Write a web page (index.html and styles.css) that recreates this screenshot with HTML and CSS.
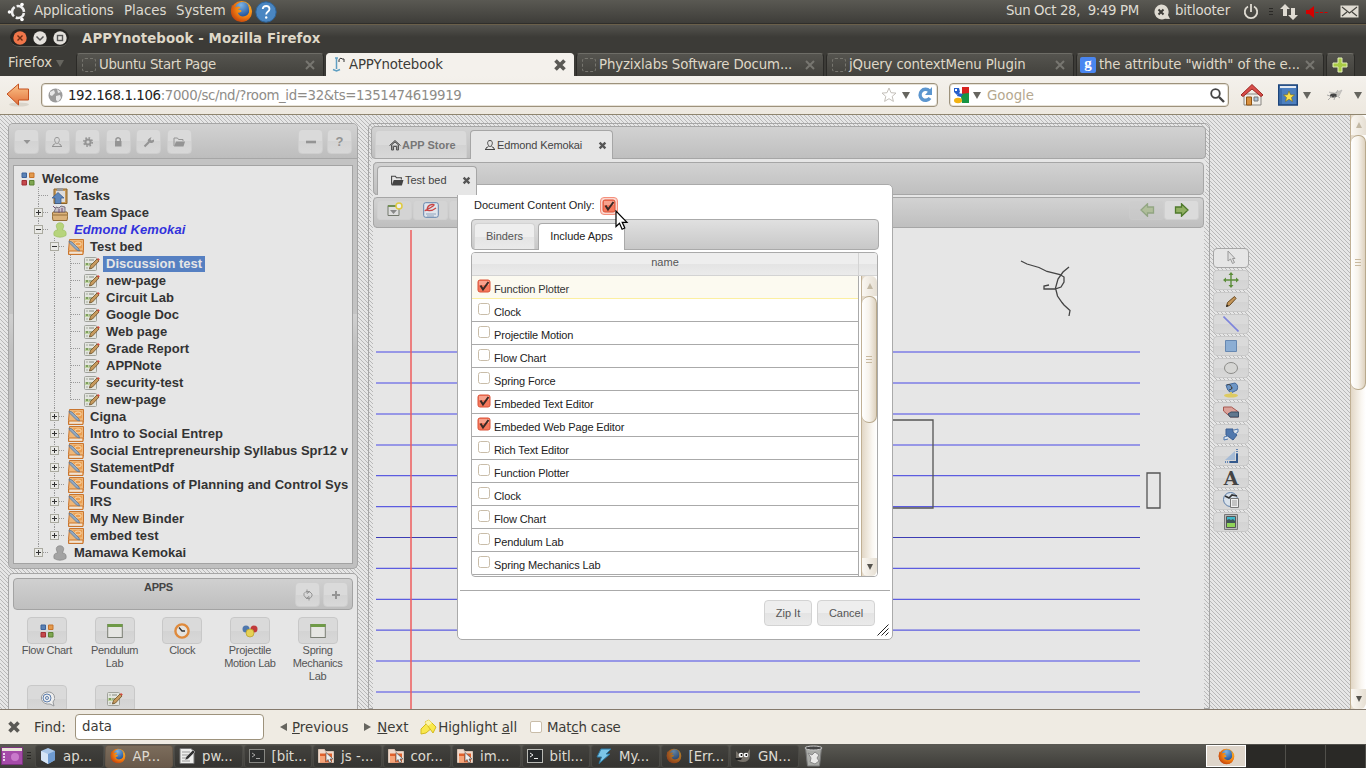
FILE: index.html
```html
<!DOCTYPE html>
<html lang="en">
<head>
<meta charset="utf-8">
<title>APPYnotebook - Mozilla Firefox</title>
<link rel="stylesheet" href="styles.css">
</head>
<body>
<svg class="defs" width="0" height="0">
  <defs>
    <linearGradient id="gOrange" x1="0" y1="0" x2="0" y2="1"><stop offset="0" stop-color="#fbc48a"/><stop offset="1" stop-color="#e2703a"/></linearGradient>
    <radialGradient id="gBlue" cx=".4" cy=".2" r=".8"><stop offset="0" stop-color="#7db4e6"/><stop offset="1" stop-color="#1d4f98"/></radialGradient>
    <radialGradient id="gFox" cx=".7" cy=".3" r=".9"><stop offset="0" stop-color="#ffc62e"/><stop offset=".5" stop-color="#f07d12"/><stop offset="1" stop-color="#b5300a"/></radialGradient>
    <symbol id="fox" viewBox="0 0 24 24"><circle cx="12" cy="12" r="11" fill="url(#gFox)"/><circle cx="13" cy="10" r="8" fill="url(#gBlue)"/><path d="M2 5Q4 8 7 7Q10 6 11 8L8 10Q12 10 12 12Q9 14 8 13Q10 18 15 17Q20 16 20 11Q20 7 18 4Q25 10 21 18Q17 24 10 22Q1 20 1 11Z" fill="url(#gFox)"/></symbol>
    <symbol id="blocks" viewBox="0 0 16 16"><path d="M2 2h4.500v4.500H2z" fill="#5b82b5" stroke="#3d629a"/><path d="M9.500 2H14v4.500H9.500z" fill="#e39a4c" stroke="#c7722a"/><path d="M2 9.500h4.500V14H2z" fill="#c4494c" stroke="#a12f35"/><path d="M9.500 9.500H14V14H9.500z" fill="#7fa651" stroke="#5b8232"/></symbol>
    <symbol id="note" viewBox="0 0 16 16"><rect x=".5" y="1.500" width="12" height="13" rx="1" fill="#e3e5df" stroke="#a1a39c"/><path d="M2 3h2v2H2zM2 11h2v2H2z" fill="#c3c8bd"/><path d="M1 7h9v3H1z" fill="#bfd4a0"/><path d="M2 7h2v2H2z" fill="#7d9e5e"/><path d="M5 4h5M5 8h4M5 12h3" stroke="#868a80"/><path d="M5.500 13l1-3.500L13 3l2 2-6.500 7z" fill="#c79a5e" stroke="#6d5026" stroke-width=".8"/><path d="M13 3l1-1 1.800 1.600-1 1.200z" fill="#d8483d"/></symbol>
    <symbol id="binder" viewBox="0 0 16 16"><path d="M1.500 .5h14v11l-.5 4H.5v-4z" fill="#efb778" stroke="#c8752f"/><path d="M1 12h14.500" stroke="#c8752f"/><path d="M1.500 12.700h12.500v2H1.500z" fill="#efe3d6"/><path d="M5 2h9v7l-4 1z" fill="#eb9e50"/><ellipse cx="10" cy="5" rx="3.200" ry="2" fill="none" stroke="#f9d9ae"/><path d="M1 2l3 1 7 7 .5 2-3-1-7-7z" fill="#92a9c3" stroke="#58728f" stroke-width=".7"/></symbol>
    <symbol id="person" viewBox="0 0 16 16"><path d="M8 .7c3 0 4.300 2.500 3.500 4.500L10.500 8Q15 8 14 13.500Q8 17 2 13.500Q1 8 5.500 8L4.500 5.200C3.700 3 5 .7 8 .7z"/></symbol>
    <symbol id="window" viewBox="0 0 16 16"><rect x=".7" y="1.500" width="14.600" height="13" fill="#e6e6e3" stroke="#7a7e74"/><path d="M.5 1h15v3H.5z" fill="#6f9a47"/></symbol>
    <symbol id="user" viewBox="0 0 12 12"><path d="M6 1.500c2 0 2.500 1.500 2.300 3S7 7.500 6 7.500 4 6 3.700 4.500 4 1.500 6 1.500zM4.500 7.500L2 9v1M7.500 7.500L10 9v1M1 10.500h10" fill="none" stroke="currentColor"/></symbol>
    <symbol id="folder" viewBox="0 0 12 12"><path d="M1 10V2h3.500l1 1.500H10V5" fill="none" stroke="currentColor"/><path d="M3 5.500h9L10.500 10.500H1z" fill="currentColor"/></symbol>
    <symbol id="cross" viewBox="0 0 10 10"><path d="M1.800 1.800l6.400 6.400M8.200 1.800L1.800 8.200" stroke="currentColor" stroke-width="2.600"/></symbol>
    <symbol id="thin" viewBox="0 0 10 10"><path d="M1 1l8 8M9 1L1 9" stroke="currentColor" stroke-width="2"/></symbol>
    <symbol id="term" viewBox="0 0 16 16"><rect x=".5" y="1.500" width="15" height="13" fill="#25282a" stroke="#b9bab5"/><path d="M3 5l3 2-3 2M7 10.500h4" fill="none" stroke="#eee"/></symbol>
    <symbol id="fold" viewBox="0 0 16 16"><path d="M.5 1.500h6l1 2h8v11H.5z" fill="#f0d9cb" stroke="#d9c2b2"/><path d="M2 5.500h12v9H2z" fill="#e0602b"/><path d="M2 8h5v6.500H2z" fill="#f5a478"/><path d="M8 4.500v9l2-2 1.500 3.500 2-1-1.500-3h3z" fill="#eee" stroke="#555" stroke-width=".7"/></symbol>
    <symbol id="pdf" viewBox="0 0 16 16"><path d="M1 .5h11l3 3v12H1z" fill="#eeeeec" stroke="#777"/><path d="M3 4h8M3 7h7M3 10h5M3 13h8" stroke="#999"/><path d="M6 12l1-3 7-7 2 2-7 7z" fill="#333" stroke="#ddd" stroke-width=".5"/></symbol>
    <symbol id="check" viewBox="0 0 14 14"><rect x="1" y="1" width="12" height="12" rx="2" fill="#f5785c" stroke="#da5238"/><path d="M2 2h10v4H2z" fill="#fab3a2" opacity=".7"/><path d="M3.500 6.500L6 10.500 11.500 3" fill="none" stroke="#3a2a26" stroke-width="2"/></symbol>
    <symbol id="box" viewBox="0 0 14 14"><rect x="1.500" y="1.500" width="11" height="11" rx="2" fill="#fff" stroke="#c9bda9"/></symbol>
    <symbol id="house" viewBox="0 0 12 12"><path d="M.5 6.500L6 1.500l5.500 5M2.500 6v5h2V7.500h3V11h2V6L6 3z" fill="currentColor" fill-opacity=".5" stroke="currentColor"/></symbol>
    <symbol id="arrow" viewBox="0 0 16 14"><path d="M1.500 4h6V.8L14 7l-6.500 6.200V10h-6z" fill="#91b063" stroke="#4f7a2c" stroke-width="1.300"/></symbol>
  </defs>
</svg>

<header class="panel">
  <svg class="ubuntu" width="20" height="20" viewBox="0 0 20 20"><circle cx="11" cy="10" r="6" fill="none" stroke="#eee" stroke-width="2.600" stroke-dasharray="10.500 2.060" stroke-dashoffset="-1"/><circle cx="2.500" cy="10" r="1.800" fill="#fff"/><circle cx="15" cy="2.500" r="1.800" fill="#fff"/><circle cx="15" cy="17.500" r="1.800" fill="#fff"/></svg>
  <span class="m-app">Applications</span><span class="m-places">Places</span><span class="m-sys">System</span>
  <svg class="p-fox" width="23" height="23"><use href="#fox"/></svg>
  <svg width="22" height="22" viewBox="0 0 22 22"><circle cx="11" cy="11" r="10.200" fill="#4a86c2" stroke="#2e6398"/><path d="M7.700 8Q8 5 11.200 5T14.500 8Q14.500 9.500 12.500 11 11.200 12 11.200 13.500" fill="none" stroke="#fff" stroke-width="1.800"/><circle cx="11.200" cy="16.500" r="1.200" fill="#fff"/></svg>
  <span class="clock">Sun Oct 28,&nbsp; 9:49 PM</span>
  <svg class="p-chat" width="18" height="16" viewBox="0 0 18 16"><path d="M8 .5a7.500 7.500 0 1 0 4 14.300L17 15 15 11A7.500 7.500 0 0 0 8 .5z" fill="#dfdbd2"/><path d="M5.500 5.500l5 5M10.500 5.500l-5 5" stroke="#3c3b37" stroke-width="2"/></svg>
  <span class="user">bitlooter</span>
  <svg class="p-power" width="16" height="16" viewBox="0 0 16 16"><path d="M5 2.500a6.200 6.200 0 1 0 6 0M8 0v8" fill="none" stroke="#dfdbd2" stroke-width="1.800"/></svg>
  <i class="grip"></i>
  <svg class="p-net" width="18" height="18" viewBox="0 0 18 18"><path d="M5 1l5 5H7v7H3V6H0zM13 17l-5-5h3V5h4v7h3z" fill="#dfdbd2"/></svg>
  <svg class="p-vol" width="22" height="12" viewBox="0 0 22 12"><path d="M0 4h3l5-4v12l-5-4H0z" fill="#d40000"/><path d="M9.500 6.500h12" stroke="#d40000" stroke-dasharray="3 1.500"/></svg>
  <svg class="p-mail" width="19" height="13" viewBox="0 0 19 13"><rect x=".5" y=".5" width="18" height="12" fill="#dfdbd2"/><path d="M2 2l7.500 6L17 2M2 11l5-4M17 11l-5-4" fill="none" stroke="#45443f" stroke-width="1.200"/></svg>
</header>

<div class="titlebar">
  <div class="wbtns">
    <svg width="14" height="14" viewBox="0 0 14 14"><circle cx="7" cy="7" r="6.700" fill="#f0764a"/><path d="M4.500 4.500l5 5M9.500 4.500l-5 5" stroke="#6b2d14" stroke-width="1.400"/></svg>
    <svg width="14" height="14" viewBox="0 0 14 14"><circle cx="7" cy="7" r="6.700" fill="#e4e1dc"/><path d="M3.500 5.500L7 9l3.500-3.500" fill="none" stroke="#555" stroke-width="1.500"/></svg>
    <svg width="14" height="14" viewBox="0 0 14 14"><circle cx="7" cy="7" r="6.700" fill="#e4e1dc"/><rect x="4.500" y="4.500" width="5" height="5" fill="none" stroke="#555" stroke-width="1.400"/></svg>
  </div>
  <span class="wtitle">APPYnotebook - Mozilla Firefox</span>
</div>

<nav class="tabs">
  <span class="ffmenu">Firefox <i class="tri"></i></span>
  <div class="tab wide"><i class="blank"></i><span>Ubuntu Start Page</span><svg width="10" height="10"><use href="#thin"/></svg></div>
  <div class="tab on"><svg class="fav" width="14" height="16" viewBox="0 0 14 16"><path d="M4.500 1v11M1 12.500l3.500 1.500L8 12.500M3 1h3" fill="none" stroke="#5f9fc2" stroke-width="1.500"/><path d="M7 5V2.500L9 1l1 1h2v3" fill="none" stroke="#333"/></svg><span>APPYnotebook</span><svg width="14" height="14"><use href="#cross"/></svg></div>
  <div class="tab"><i class="blank"></i><span>Phyzixlabs Software Docum...</span><svg width="10" height="10"><use href="#thin"/></svg></div>
  <div class="tab"><i class="blank"></i><span>jQuery contextMenu Plugin</span><svg width="10" height="10"><use href="#thin"/></svg></div>
  <div class="tab"><b class="g">g</b><span>the attribute "width" of the e...</span><svg width="10" height="10"><use href="#thin"/></svg></div>
  <div class="tab plus"><svg width="16" height="16" viewBox="0 0 16 16"><path d="M6 1h4v5h5v4h-5v5H6v-5H1V6h5z" fill="#a9cc45" stroke="#e4f0b8"/></svg></div>
</nav>

<div class="nav">
  <svg class="back" width="24" height="24" viewBox="0 0 24 24"><ellipse cx="13" cy="21.500" rx="10" ry="2" fill="#d9d4ca"/><path d="M1 11L12.500 1v5H22.500v11H12.500v5z" fill="url(#gOrange)" stroke="#c4501f"/></svg>
  <div class="url">
    <svg width="15" height="15" viewBox="0 0 15 15"><circle cx="7.500" cy="7.500" r="7" fill="#9b9b9b"/><path d="M2 4l4-2 1 3-3 3-2-1zM8 8l4-1 1 3-3 4-2-2zM9 1l4 3-3 1z" fill="#e8e8e8"/></svg>
    <span><b>192.168.1.106</b>:7000/sc/nd/?room_id=32&amp;ts=1351474619919</span>
    <svg class="star" width="16" height="16" viewBox="0 0 16 16"><path d="M8 1l2 4.700 5 .4-3.800 3.300 1.200 5L8 11.700l-4.400 2.700 1.200-5L1 6.100l5-.4z" fill="#fff" stroke="#c4c0ba"/></svg>
    <i class="tri d"></i>
    <svg class="reload" width="16" height="16" viewBox="0 0 16 16"><path d="M12.500 4A5.500 5.500 0 1 0 13 11" fill="none" stroke="#5c96cf" stroke-width="3.400"/><path d="M8 8h7V0z" fill="#5c96cf"/></svg>
  </div>
  <div class="search">
    <svg width="17" height="17" viewBox="0 0 17 17"><path d="M9 0h7v7H9z" fill="#d8241f"/><path d="M7.500 7l8.500-1v10H9z" fill="#189543"/><path d="M1 1h5l1 4-3 3-3-3z" fill="#255ecb"/><path d="M5 6l5 1-2 3-4-1z" fill="#255ecb"/><path d="M2 2h2v2H2z" fill="#fff"/><ellipse cx="5" cy="13.500" rx="4" ry="2.700" fill="#f2b213"/></svg>
    <i class="tri d"></i><span>Google</span>
    <svg class="lens" width="15" height="15" viewBox="0 0 15 15"><circle cx="5.500" cy="5.500" r="4.300" fill="none" stroke="#444" stroke-width="1.800"/><path d="M9 9l5 5" stroke="#444" stroke-width="2.400"/></svg>
  </div>
  <svg class="home" width="24" height="24" viewBox="0 0 24 24"><path d="M4 11h17v11H4z" fill="#f0eee9" stroke="#8a8782"/><path d="M6.500 14h5v8h-5z" fill="#d9903e" stroke="#8f5413"/><path d="M14 14h4v4h-4z" fill="#a9c4da" stroke="#777"/><path d="M1 12L12 1.500 23 12l-2 1.500L12 6l-9 7.500z" fill="#d94d49" stroke="#9c2723"/></svg>
  <svg class="bm" width="20" height="22" viewBox="0 0 20 22"><path d="M.7 1h18.600v20H.7z" fill="#4c7fbf" stroke="#1d4479" stroke-width="1.400"/><path d="M2 2h16v2H2z" fill="#e4eaf2"/><path d="M3 5v15" stroke="#2d5d9c"/><path d="M11 7l1.500 3.700 4 .3-3 2.500 1 4-3.500-2.200-3.500 2.200 1-4-3-2.500 4-.3z" fill="#f9e04d" stroke="#806b10" stroke-width=".6"/></svg>
  <i class="tri d t1"></i>
  <svg class="fly" width="16" height="15" viewBox="0 0 16 15"><path d="M8 5l7-3-3 6zM2 4l6 1-2 2z" fill="#c9c6c0" stroke="#aaa" stroke-width=".5"/><ellipse cx="6.500" cy="7.500" rx="3.500" ry="2" fill="#444"/><path d="M0 7l3 1M1 12l4-4M7 12l1-4M13 10l-4-3M9 5l2-3" stroke="#999" stroke-width=".8"/></svg>
  <i class="tri d t2"></i>
</div>

<main class="page">
  <div class="left">
    <section class="treepanel">
      <div class="tools">
        <b class="btn"><svg width="12" height="12" viewBox="0 0 12 12"><path d="M2.500 4h7L6 8z" fill="currentColor"/></svg></b>
        <b class="btn"><svg width="12" height="12"><use href="#user"/></svg></b>
        <b class="btn"><svg width="12" height="12" viewBox="0 0 12 12"><circle cx="6" cy="6" r="2.600" fill="none" stroke="currentColor" stroke-width="2"/><circle cx="6" cy="6" r="4.200" fill="none" stroke="currentColor" stroke-width="1.600" stroke-dasharray="1.650 1.650"/></svg></b>
        <b class="btn"><svg width="12" height="12" viewBox="0 0 12 12"><path d="M3 5h6.500v5.500H3z" fill="currentColor"/><path d="M4 5V3q2.200-2.500 4.300 0v2" fill="none" stroke="currentColor" stroke-width="1.400"/></svg></b>
        <b class="btn"><svg width="12" height="12" viewBox="0 0 12 12"><path d="M1.500 10.500L6 6" stroke="currentColor" stroke-width="2.200"/><path d="M8.500 1L7.500 3.500l1 1L11 3.500q.5 3-2 3.500T5 5.500 8.500 1z" fill="currentColor"/></svg></b>
        <b class="btn"><svg width="12" height="12"><use href="#folder"/></svg></b>
        <b class="btn push"><svg width="12" height="12" viewBox="0 0 12 12"><path d="M1 4.700h10v2.600H1z" fill="currentColor"/></svg></b>
        <b class="btn">?</b>
      </div>
      <div class="treebody"><div class="tree">
        <div class="row root"><svg><use href="#blocks"/></svg><span>Welcome</span></div>
        <div class="row"><i class="v h"></i><svg viewBox="0 0 16 16"><path d="M2 1h13v14.500H2z" fill="#c99a58" stroke="#8b6429"/><path d="M4 3h9v11H4z" fill="#ddd"/><path d="M5 0h6v3H5z" fill="#999"/><path d="M0 10l6-5.500L12 10H9v5.500H3V10z" fill="#5f87bb" stroke="#34588a" stroke-width=".7"/></svg><span>Tasks</span></div>
        <div class="row"><i class="v h"></i><svg viewBox="0 0 16 16"><path d="M1 7h14l1 3-1 5.500H1L0 10z" fill="#dbb27a" stroke="#936c37"/><path d="M2 7l2-5 3 1 2-2 4 1v5z" fill="#c9c3cc" stroke="#635a6c" stroke-width=".8"/><path d="M1 1l2 2M7 4v4M10 3v4" stroke="#724d72"/><path d="M0 10h16" stroke="#936c37"/></svg><span>Team Space</span><u class="x p"></u></div>
        <div class="row"><i class="v h"></i><svg fill="#b6d47c" stroke="#97bb57" stroke-width=".6"><use href="#person"/></svg><span class="me">Edmond Kemokai</span><u class="x"></u></div>
        <div class="row"><i class="v"></i><i class="v h"></i><svg><use href="#binder"/></svg><span>Test bed</span><u class="x l2"></u></div>
        <div class="row"><i class="v"></i><i class="v"></i><i class="v h"></i><svg><use href="#note"/></svg><span class="sel">Discussion test</span></div>
        <div class="row"><i class="v"></i><i class="v"></i><i class="v h"></i><svg><use href="#note"/></svg><span>new-page</span></div>
        <div class="row"><i class="v"></i><i class="v"></i><i class="v h"></i><svg><use href="#note"/></svg><span>Circuit Lab</span></div>
        <div class="row"><i class="v"></i><i class="v"></i><i class="v h"></i><svg><use href="#note"/></svg><span>Google Doc</span></div>
        <div class="row"><i class="v"></i><i class="v"></i><i class="v h"></i><svg><use href="#note"/></svg><span>Web page</span></div>
        <div class="row"><i class="v"></i><i class="v"></i><i class="v h"></i><svg><use href="#note"/></svg><span>Grade Report</span></div>
        <div class="row"><i class="v"></i><i class="v"></i><i class="v h"></i><svg><use href="#note"/></svg><span>APPNote</span></div>
        <div class="row"><i class="v"></i><i class="v"></i><i class="v h"></i><svg><use href="#note"/></svg><span>security-test</span></div>
        <div class="row"><i class="v"></i><i class="v"></i><i class="v h end"></i><svg><use href="#note"/></svg><span>new-page</span></div>
        <div class="row"><i class="v"></i><i class="v h"></i><svg><use href="#binder"/></svg><span>Cigna</span><u class="x p l2"></u></div>
        <div class="row"><i class="v"></i><i class="v h"></i><svg><use href="#binder"/></svg><span class="ls">Intro to Social Entrep</span><u class="x p l2"></u></div>
        <div class="row"><i class="v"></i><i class="v h"></i><svg><use href="#binder"/></svg><span>Social Entrepreneurship Syllabus Spr12 v</span><u class="x p l2"></u></div>
        <div class="row"><i class="v"></i><i class="v h"></i><svg><use href="#binder"/></svg><span>StatementPdf</span><u class="x p l2"></u></div>
        <div class="row"><i class="v"></i><i class="v h"></i><svg><use href="#binder"/></svg><span class="ls">Foundations of Planning and Control Sys</span><u class="x p l2"></u></div>
        <div class="row"><i class="v"></i><i class="v h"></i><svg><use href="#binder"/></svg><span>IRS</span><u class="x p l2"></u></div>
        <div class="row"><i class="v"></i><i class="v h"></i><svg><use href="#binder"/></svg><span class="ls">My New Binder</span><u class="x p l2"></u></div>
        <div class="row"><i class="v"></i><i class="v h end"></i><svg><use href="#binder"/></svg><span>embed test</span><u class="x p l2"></u></div>
        <div class="row"><i class="v h end"></i><svg fill="#a3a3a3" stroke="#808080" stroke-width=".6"><use href="#person"/></svg><span>Mamawa Kemokai</span><u class="x p"></u></div>
      </div></div>
    </section>
    <section class="apps">
      <div class="appshead"><span>APPS</span>
        <b class="btn"><svg width="12" height="12" viewBox="0 0 12 12"><path d="M4 2.500L2 4.500v2L4 9M8 3l2 2v2L8 9.500M5 .5v4L8 2.500H4M7 11.500v-4L4 9.500h4" fill="none" stroke="currentColor"/></svg></b>
        <b class="btn"><svg width="12" height="12" viewBox="0 0 12 12"><path d="M6 2v8M2 6h8" stroke="currentColor" stroke-width="2"/></svg></b>
      </div>
      <div class="appgrid">
        <div><b class="abtn"><svg width="16" height="16"><use href="#blocks"/></svg></b>Flow Chart</div>
        <div><b class="abtn"><svg width="16" height="16"><use href="#window"/></svg></b>Pendulum<br>Lab</div>
        <div><b class="abtn"><svg width="16" height="16" viewBox="0 0 16 16"><circle cx="8" cy="8" r="6.600" fill="#e5e3df" stroke="#df8a3c" stroke-width="2.400"/><path d="M5 4.500L8 8h3" fill="none" stroke="#333" stroke-width="1.300"/></svg></b>Clock</div>
        <div><b class="abtn"><svg width="16" height="16" viewBox="0 0 16 16"><circle cx="4" cy="6" r="3.500" fill="#5078ad"/><circle cx="12" cy="6" r="3.500" fill="#c13b3b"/><circle cx="8" cy="10" r="4" fill="#e6d154" stroke="#b39c28" stroke-width=".7"/></svg></b>Projectile<br>Motion Lab</div>
        <div><b class="abtn"><svg width="16" height="16"><use href="#window"/></svg></b>Spring<br>Mechanics<br>Lab</div>
        <div><b class="abtn"><svg width="16" height="16" viewBox="0 0 16 16"><path d="M8 1a7 6 0 1 0 3 12l4 2-1-4A7 6 0 0 0 8 1z" fill="#eee" stroke="#96999c"/><circle cx="8" cy="7" r="4" fill="none" stroke="#5d7fae"/><circle cx="8" cy="7" r="1.500" fill="none" stroke="#5d7fae"/></svg></b></div>
        <div><b class="abtn"><svg width="16" height="16"><use href="#note"/></svg></b></div>
      </div>
    </section>
  </div>

  <section class="center">
    <div class="bar b1">
      <div class="ptab"><svg width="12" height="12"><use href="#house"/></svg><b>APP Store</b></div>
      <div class="ptab on e"><svg width="12" height="12"><use href="#user"/></svg><span>Edmond Kemokai</span><svg class="x" width="9" height="9"><use href="#cross"/></svg></div>
    </div>
    <div class="bar b2">
      <div class="ptab on tb"><svg width="14" height="13"><use href="#folder"/></svg><span>Test bed</span><svg class="x" width="9" height="9"><use href="#cross"/></svg></div>
    </div>
    <div class="bar b3">
      <b class="tbtn"><svg width="16" height="16" viewBox="0 0 16 16"><path d="M1 3.500h11v10H1z" fill="#ddd" stroke="#73786d"/><path d="M1 3h11v2H1z" fill="#718f54"/><path d="M3 8h7l-3.500 4z" fill="#888"/><circle cx="12" cy="4" r="3" fill="#eee" stroke="#dfcb40" stroke-width="1.500"/></svg></b>
      <b class="tbtn"><svg width="16" height="16" viewBox="0 0 16 16"><rect x=".7" y=".7" width="14.600" height="14.600" rx="2" fill="#dfe5ec" stroke="#6585ae"/><path d="M3 12h10M4 14h7" stroke="#8fa3bd"/><path d="M4 9Q4 3 9 2.500T7 6 3 8q5 2 10-2" fill="none" stroke="#c94444" stroke-width="1.300"/></svg></b>
      <b class="tbtn"></b>
      <b class="tbtn dim"><svg class="flip" width="16" height="14"><use href="#arrow"/></svg></b>
      <b class="tbtn go"><svg width="16" height="14"><use href="#arrow"/></svg></b>
    </div>
    <svg class="canvas" width="831" height="482" viewBox="373 228 831 482">
      <path d="M376 352h764M376 383h764M376 414h764M376 445h764" stroke="#7d7de6" stroke-width="1.600"/>
      <path d="M376 475.700h764M376 506.600h764M376 568.400h764M376 599.300h764M376 630.200h764" stroke="#5c5ce0" stroke-width="1.300"/>
      <path d="M376 661h764M376 692h764" stroke="#7d7de6" stroke-width="1.600"/>
      <path d="M376 537.500h764" stroke="#3c3cb4"/>
      <path d="M411 230v480" stroke="#ee5c5c" stroke-width="1.500"/>
      <path d="M880 420h53v88h-53M1147 473h13v35h-13z" fill="none" stroke="#555" stroke-width="1.300"/>
      <path d="M1021 261L1027 264 1039 267.500 1047 271.500 1060 274.500 1064 277V282L1061 287 1055 289H1044V286L1049 285M1069 267L1063 272 1058 279 1055.500 288 1057.500 296 1062 302.500 1064 305 1070 310.500 1069 316" fill="none" stroke="#444" stroke-width="1.300"/>
    </svg>
  </section>

  <aside class="side">
    <b class="sbtn on"><svg viewBox="0 0 16 16"><path d="M5 1v10l2.500-2 2 4.500 2-1-2-4H12z" fill="#e0e0e0" stroke="#999"/></svg></b>
    <b class="sbtn"><svg viewBox="0 0 16 16"><path d="M8 2v12M2 8h12" stroke="#5c8d3a" stroke-width="1.400"/><path d="M8 0l2.500 3h-5zM8 16l2.500-3h-5zM0 8l3-2.500v5zM16 8l-3-2.500v5z" fill="#5c8d3a"/></svg></b>
    <b class="sbtn"><svg viewBox="0 0 16 16"><path d="M3.500 12.500l1-4 7-6 1.500 2-6.500 7z" fill="#c4965a" stroke="#694a20"/><path d="M3 13l1-2.500 1.500 1.500z" fill="#222"/></svg></b>
    <b class="sbtn"><svg viewBox="0 0 16 16"><path d="M.5 .5l15 15" stroke="#7d84dc" stroke-width="1.600"/></svg></b>
    <b class="sbtn"><svg viewBox="0 0 16 16"><path d="M2.500 2.500h11v11h-11z" fill="#8caed4" stroke="#6788b1"/></svg></b>
    <b class="sbtn"><svg viewBox="0 0 16 16"><ellipse cx="8" cy="8" rx="6.500" ry="5.500" fill="#d6d6d4" stroke="#8d8d8a"/></svg></b>
    <b class="sbtn"><svg viewBox="0 0 16 16"><ellipse cx="8" cy="13.500" rx="7" ry="2" fill="#ddca62"/><path d="M3 3l9-2q4 2 2 7l-6 3q-4-2-5-8z" fill="#6f97c6" stroke="#44699a"/><path d="M4 3q4-2 5 4M6 8q3 0 3-3" fill="none" stroke="#444"/><path d="M7 10h2v4H7z" fill="#ddca62"/></svg></b>
    <b class="sbtn"><svg viewBox="0 0 16 16"><path d="M.5 3h8l7 5v5h-8l-7-6z" fill="#dba29a" stroke="#a65850"/><path d="M8 8h7.500v5H7l-2-3z" fill="#60788f" stroke="#394f65"/></svg></b>
    <b class="sbtn"><svg viewBox="0 0 16 16"><path d="M3 3h7v3l4 3-4 5-4-3-3-2z" fill="#5078ad" stroke="#3c5f92"/><path d="M11 4l4-1v3l-3 2M5 10l-4 1v3l4-1" fill="#dde6f0" stroke="#5078ad"/></svg></b>
    <b class="sbtn"><svg viewBox="0 0 16 16"><path d="M2 12L12 3v9z" fill="#a5bbd6"/><path d="M14 6v8H7" fill="none" stroke="#34598c" stroke-width="2"/><path d="M2 14h5M14 1v5" stroke="#6385b3" stroke-width="2" stroke-dasharray="1 1"/></svg></b>
    <b class="sbtn letter">A</b>
    <b class="sbtn"><svg viewBox="0 0 16 16"><circle cx="7.500" cy="7.500" r="7" fill="#d8e1ea" stroke="#5d7ea8"/><path d="M2 4l4 2 3-3 5 1" fill="none" stroke="#333" stroke-width="1.700"/><path d="M7.500 6.500h8v9h-8z" fill="#eee" stroke="#777"/><path d="M9 9h5M9 11h5M9 13h5" stroke="#999"/></svg></b>
    <b class="sbtn"><svg viewBox="0 0 16 16"><path d="M1.500 .5h13v15h-13z" fill="#bbb" stroke="#777"/><path d="M3.500 2.500h9v11h-9z" fill="#40b7ca" stroke="#555"/><path d="M4 13V9h8v4z" fill="#90d458"/><path d="M4 9V6l2-1 2 1 2-1 2 2v2z" fill="#405557"/></svg></b>
  </aside>
  <div class="scroll main"><i class="up"></i><i class="thumb"></i><i class="down"></i></div>

  <div class="dialog">
    <div class="dtop">Document Content Only: <span class="focus"><svg width="14" height="14"><use href="#check"/></svg></span></div>
    <div class="dtabs"><span class="dt">Binders</span><span class="dt on">Include Apps</span></div>
    <div class="table">
      <div class="thead"><span>name</span><i></i></div>
      <div class="tbody">
        <div class="rows">
          <div class="hot"><svg><use href="#check"/></svg>Function Plotter</div>
          <div><svg><use href="#box"/></svg>Clock</div>
          <div><svg><use href="#box"/></svg>Projectile Motion</div>
          <div><svg><use href="#box"/></svg>Flow Chart</div>
          <div><svg><use href="#box"/></svg>Spring Force</div>
          <div><svg><use href="#check"/></svg>Embeded Text Editor</div>
          <div><svg><use href="#check"/></svg>Embeded Web Page Editor</div>
          <div><svg><use href="#box"/></svg>Rich Text Editor</div>
          <div><svg><use href="#box"/></svg>Function Plotter</div>
          <div><svg><use href="#box"/></svg>Clock</div>
          <div><svg><use href="#box"/></svg>Flow Chart</div>
          <div><svg><use href="#box"/></svg>Pendulum Lab</div>
          <div><svg><use href="#box"/></svg>Spring Mechanics Lab</div>
        </div>
        <div class="scroll inner"><i class="up"></i><i class="thumb"></i><i class="down"></i></div>
      </div>
    </div>
    <div class="dfoot"><b>Zip It</b><b>Cancel</b></div>
    <svg class="resize" width="12" height="12" viewBox="0 0 12 12"><path d="M.5 11.500l11-11M4.500 11.500l7-7M8.500 11.500l3-3" stroke="#222"/></svg>
  </div>
  <svg class="cursor" width="14" height="21" viewBox="0 0 14 21"><path d="M1 1v15.500l3.500-3.300 2.600 6 2.700-1.200-2.600-5.700H12z" fill="#fff" stroke="#000" stroke-width="1.200"/></svg>
</main>

<div class="find">
  <svg class="fx" width="14" height="14"><use href="#cross"/></svg>
  <span class="fl">Find:</span><span class="finput">data</span>
  <i class="ar l"></i><span class="f1"><u>P</u>revious</span><i class="ar r"></i><span class="f2"><u>N</u>ext</span>
  <svg class="hl" width="17" height="17" viewBox="0 0 17 17"><path d="M1 10l7-7 5 5-7 6-5 1z" fill="#f9e84e" stroke="#d3b91e"/><path d="M5 3l4-2 7 7-3 6z" fill="#fae94a" stroke="#d3b91e"/><path d="M5 3l4-2 3 3-4 3z" fill="#fdf5a8"/></svg>
  <span class="f3">Highlight <u>a</u>ll</span><i class="fcb"></i><span class="f4">Mat<u>c</u>h case</span>
</div>

<footer class="task">
  <svg class="desk" width="22" height="18" viewBox="0 0 22 18"><path d="M.5 .5h21v17H.5z" fill="#a54ba9" stroke="#7c347f"/><path d="M1 1h20v3H1z" fill="#e9e4d9"/><path d="M2 6h2v2H2zM2 9h2v2H2zM2 12h2v2H2z" fill="#e9d0ea"/><circle cx="14" cy="10" r="4" fill="#c97acb"/></svg>
  <i class="grip"></i>
  <div class="tk"><svg viewBox="0 0 16 16"><path d="M8 0l7 3v9l-7 4-7-4V3z" fill="#a9c6e8"/><path d="M1 3l7 3v10l-7-4z" fill="#d5e4f5"/><path d="M15 3L8 6v10l7-4z" fill="#6f9bd0"/></svg>ap...</div>
  <div class="tk on"><svg><use href="#fox"/></svg>AP...</div>
  <div class="tk"><svg><use href="#pdf"/></svg>pw...</div>
  <div class="tk"><svg opacity=".6"><use href="#term"/></svg>[bit...</div>
  <div class="tk"><svg><use href="#fold"/></svg>js -...</div>
  <div class="tk"><svg><use href="#fold"/></svg>cor...</div>
  <div class="tk"><svg><use href="#fold"/></svg>im...</div>
  <div class="tk"><svg><use href="#term"/></svg>bitl...</div>
  <div class="tk"><svg viewBox="0 0 16 16"><path d="M5 1h10l-5 5h4L3 15.500l2.500-6.500H1z" fill="#7cc6e8" stroke="#2d7ba5"/></svg>My...</div>
  <div class="tk"><svg opacity=".6"><use href="#fox"/></svg>[Err...</div>
  <div class="tk"><svg viewBox="0 0 16 16"><path d="M1 3l3 3 8-1 3-4v7q-1 6-7 6T1 10z" fill="#77726a"/><circle cx="6" cy="7" r="2.300" fill="#fff"/><circle cx="11" cy="7" r="2.300" fill="#fff"/><circle cx="6.500" cy="7" r="1"/><circle cx="11.300" cy="7" r="1"/><path d="M0 10h7l-1 2H1z" fill="#222"/></svg>GN...</div>
  <svg class="trash" width="20" height="22" viewBox="0 0 20 22"><path d="M1.500 3l2 18h12l2-18z" fill="#a9aba7" stroke="#777"/><ellipse cx="9.500" cy="3" rx="8.500" ry="2" fill="#444" stroke="#ccc"/><path d="M4 8l4 2 3-3 4 3-2 3 2 3-4 3-5-2 1-4z" fill="#e9e9e7" stroke="#888"/></svg>
  <div class="ws"><i class="on"><svg width="17" height="17"><use href="#fox"/></svg></i><i></i><i></i><i></i></div>
</footer>
</body>
</html>
```
FILE: styles.css
```css
* { box-sizing: border-box; }
body {
  margin: 0; width: 1366px; height: 768px; overflow: hidden;
  display: flex; flex-direction: column;
  font: 13.33px "DejaVu Sans", sans-serif; color: #3c3b37; white-space: nowrap;
}
svg { flex: none; display: block; }
i { font-style: normal; }
.defs { position: absolute; }

/* desktop panel */
.panel {
  flex: none; height: 24px; display: flex; align-items: center; padding-left: 7px;
  background: linear-gradient(#5a5953, #3e3d39); color: #dfdbd2; border-bottom: 1px solid #2f2e2b;
}
.panel span { margin-top: -2px; }
.m-app { margin-left: 7px; width: 90px; letter-spacing: -.15px; }
.m-places { width: 52px; }
.m-sys { width: 54px; }
.p-fox { margin-right: 2px; }
.clock { margin-left: 729px; width: 147px; letter-spacing: -.37px; }
.p-chat { margin-right: 4px; }
.user { width: 68px; letter-spacing: -.15px; }
.grip { width: 4px; height: 8px; margin-left: 10px; background: repeating-linear-gradient(#2a2926 0 1px, transparent 1px 3px); }
.p-net { margin-left: 7px; }
.p-vol { margin-left: 8px; }
.p-mail { margin-left: 12px; }

.titlebar {
  flex: none; height: 29px; display: flex; align-items: center; padding: 0 0 2px 10px;
  background: linear-gradient(#55544f, #3c3b37 12px); border-top: 1px solid #6a5f4a;
}
.wbtns { width: 59px; height: 18px; border-radius: 9px; background: #272623; display: flex; gap: 6px; align-items: center; padding-left: 3px; border-bottom: 1px solid #5f5e58; }
.wtitle { margin-left: 13px; font-weight: bold; color: #dfd8c8; letter-spacing: .1px; }

.tabs { flex: none; height: 23px; display: flex; background: #3c3b37; color: #dfd8c8; }
.ffmenu { width: 76px; padding: 2px 0 0 8px; }
.tri { display: inline-block; border: 4px solid transparent; border-top: 7px solid #66655f; border-bottom: 0; }
.tri.d { border-top-color: #66655f; }
.tab {
  width: 248px; margin-right: 2px; height: 23px; display: flex; align-items: center; padding: 0 8px 1px 5px;
  background: linear-gradient(#55544f, #42413c); border: 1px solid #2b2a27; border-top-color: #6e6d67; border-bottom: 0; border-radius: 4px 4px 0 0;
  color: #dfd8c8; letter-spacing: -.15px;
}
.tab.wide { letter-spacing: -.3px; }
.tab span { flex: 1; margin-left: 3px; }
.tab svg:last-child { color: #777670; }
.tab.on { background: #f4f1ec; color: #3c3b37; border-color: #f4f1ec; padding-right: 6px; }
.tab.on svg:last-child { color: #5a5955; }
.blank { width: 14px; height: 14px; border: 1px dashed #77766f; border-radius: 3px; }
.g { width: 16px; height: 16px; margin-left: -2px; background: #4a86f0; color: #fff; border-radius: 2px; font: bold 15px/12px "Liberation Serif", serif; text-align: center; }
.tab.plus { width: 29px; padding-left: 5px; }

.nav {
  flex: none; height: 39px; display: flex; align-items: center; padding-left: 6px;
  background: linear-gradient(#f4f1ec, #ede8df); border-bottom: 1px solid #8f856f;
}
.url, .search { height: 24px; background: #fff; border: 1px solid #9d927c; border-radius: 4px; display: flex; align-items: center; box-shadow: inset 0 0 0 1px #e7e2d8; }
.url { margin-left: 11px; width: 897px; padding-left: 6px; color: #8e8c88; letter-spacing: -.37px; }
.url span { margin-left: 5px; flex: 1; }
.url b { font-weight: normal; color: #222; }
.star { margin-right: 5px; }
.reload { margin: 0 4px 0 7px; }
.search { margin-left: 11px; width: 280px; padding-left: 3px; color: #b5a88f; }
.search .tri { margin-left: 3px; }
.search span { margin-left: 6px; flex: 1; }
.lens { margin-right: 3px; }
.home { margin-left: 11px; }
.bm { margin-left: 14px; }
.t1 { margin-left: 5px; }
.fly { margin-left: 16px; }
.t2 { margin-left: 11px; }

/* page */
.page, .center {
  background: #e6e6e6 url("data:image/svg+xml,%3Csvg xmlns='http://www.w3.org/2000/svg' width='4' height='4' shape-rendering='crispEdges'%3E%3Cpath d='M0 0h1v1H0zM1 1h1v1H1zM2 2h1v1H2zM3 3h1v1H3z' fill='%23b8b8b8'/%3E%3C/svg%3E");
}
.page {
  position: relative; flex: none; height: 594px; display: flex; overflow: hidden;
  font-family: "Liberation Sans", Arial, sans-serif; color: #333;
}
.left { width: 350px; margin: 8px 0 0 8px; flex: none; display: flex; flex-direction: column; }
.treepanel {
  height: 446px; border: 1px solid #a6a6a6; border-radius: 5px; flex: none;
  background: linear-gradient(#c3c3c3 190px, #d0d0d0 190px, #c0c0c0 225px);
}
.tools { height: 35px; border-bottom: 1px solid #a6a6a6; border-radius: 4px 4px 0 0; background: linear-gradient(#d2d2d2, #bdbdbd); display: flex; gap: 5.600px; padding: 5px 5px 0; }
.btn {
  width: 25px; height: 25px; display: flex; align-items: center; justify-content: center; flex: none;
  border: 1px solid #cecece; border-radius: 4px; background: linear-gradient(#dadada 50%, #d3d3d3 50%, #d8d8d8); color: #949494; font-size: 13px;
}
.push { margin-left: auto; }
.push + .btn { margin-left: -2px; }
.treebody { margin: 6px 4px 0; height: 399px; border: 1px solid #a3a3a3; background: #e6e6e6; padding: 4px 3px 0 5px; }
.tree { font-weight: bold; font-size: 13px; color: #333; }
.row { height: 17px; display: flex; align-items: center; position: relative; padding-left: 11px; }
.row svg { width: 16px; height: 16px; margin: 0 3px 0 6px; }
.row span { padding: 0 3px; line-height: 16px; }
.row .ls { letter-spacing: .07px; }
.row.root { padding-left: 1px; }
.row.root svg { margin-left: 0; }
.v { width: 16px; height: 17px; flex: none; position: relative; background: repeating-linear-gradient(#999 0 1px, transparent 1px 2px) 8px 0 / 1px 100% no-repeat; }
.v.h::after { content: ""; position: absolute; left: 9px; top: 8px; width: 10px; height: 1px; background: repeating-linear-gradient(90deg, #999 0 1px, transparent 1px 2px); }
.v.end { background-size: 1px 9px; }
.row .x { position: absolute; left: 15px; top: 4px; width: 9px; height: 9px; border: 1px solid #aaaaa0; background: linear-gradient(#333, #333) 1px 3px / 5px 1px no-repeat, #e9e9e6; }
.row .x.p { background: linear-gradient(#333, #333) 1px 3px / 5px 1px no-repeat, linear-gradient(#333, #333) 3px 1px / 1px 5px no-repeat, #e9e9e6; }
.row .x.l2 { left: 31px; }
.me { color: #3232dc; font-style: italic; letter-spacing: .12px; }
.row .sel { background: #5680c2; color: #e6e6e6; }

.apps { margin-top: 4px; flex: none; height: 160px; border: 1px solid #a6a6a6; border-radius: 5px; background: #e6e6e6; padding: 4px; overflow: hidden; font-size: 11px; color: #555; letter-spacing: -.3px; }
.appshead { height: 32px; border: 1px solid #a3a3a3; border-radius: 4px; background: linear-gradient(#d0d0d0, #bfbfbf); display: flex; gap: 3px; padding: 3px 4px 3px 3px; }
.appshead span { flex: 1; font-weight: bold; color: #444; text-align: center; margin: -1px -8px 0 0; }
.appgrid { display: grid; grid-template-columns: repeat(5, 67.700px); grid-template-rows: 68px 60px; margin: 7px 0 0 0; text-align: center; line-height: 13px; }
.abtn { display: flex; align-items: center; justify-content: center; width: 40px; height: 27px; margin: 0 auto; border: 1px solid #c8c8c8; border-radius: 4px; background: linear-gradient(#dadada 50%, #d3d3d3 50%, #d8d8d8); }

.center { width: 842px; margin: 8px 0 0 10px; flex: none; border: 1px solid #a6a6a6; border-radius: 5px 5px 0 0; padding: 2px 3px 0 2px; }
.bar { border: 1px solid #a6a6a6; border-radius: 4px; background: linear-gradient(#d2d2d2, #bfbfbf); display: flex; font-size: 12px; color: #555; padding: 3px 3px 0; }
.b1 { height: 33px; position: relative; }
.b2 { height: 33px; margin: 3px 2px 0; box-shadow: 0 -3px 0 2px #e6e6e6; }
.b3 { height: 31px; margin: 2px 2px 0; padding: 2px 4px 0 3px; box-shadow: 0 -1px 0 2px #e6e6e6; clip-path: inset(-2px -2px 0 -2px); }
.ptab { height: 28px; border-radius: 4px 4px 0 0; background: linear-gradient(#dadada 50%, #d2d2d2 50%, #d8d8d8); display: flex; align-items: center; border: 1px solid #cfcfcf; border-bottom: 0; width: 92px; padding-left: 13px; font-size: 11px; }
.ptab > :nth-child(2) { margin-left: 1px; }
.ptab b { color: #777; }
.ptab.on { background: #e6e6e6; border-color: #a6a6a6; height: 29px; color: #444; position: relative; z-index: 1; }
.ptab .x { margin-left: auto; color: #555; }
.ptab.e { width: 143px; margin-left: 3px; padding: 0 5px 0 13px; letter-spacing: -.12px; }
.ptab.tb { width: 100px; padding: 0 5px 2px 12px; }
.tbtn { width: 35px; height: 20px; margin-right: 1px; border-radius: 3px; border: 1px solid #d0d0d0; background: #d4d4d4; display: flex; align-items: center; justify-content: center; }
.tbtn:nth-child(3) { margin-right: auto; }
.bar .dim { opacity: .45; margin-right: 0; background: #ccc; }
.flip { transform: scaleX(-1); }
.bar .go { background: #dbdbdb; margin-right: 0; }
.canvas { position: relative; margin-left: 2px; background: #e6e6e6; }

.side { margin: 133px 0 0 3px; width: 36px; display: flex; flex-direction: column; gap: 2px; }
.sbtn { height: 20px; flex: none; border: 1px solid #c8c8c8; border-radius: 4px; background: linear-gradient(#dadada 50%, #d3d3d3 50%, #d8d8d8); display: flex; align-items: center; justify-content: center; }
.sbtn svg { width: 16px; height: 16px; }
.sbtn.on { background: #e6e6e6; border-color: #a6a6a6; }
.letter { font: 900 19px/18px "DejaVu Serif", serif; color: #444; }

.scroll { display: flex; flex-direction: column; width: 16px; background: linear-gradient(90deg, #e2d7c6, #faf7f2 70%, #fff); border-left: 1px solid #c0b095; }
.scroll.main { margin-left: auto; }
.up, .down { height: 20px; display: flex; align-items: center; justify-content: center; background: linear-gradient(90deg, #faf7f2, #e6dfd3); border-radius: 6px 6px 0 0; flex: none; }
.up::before { content: ""; border: 3px solid transparent; border-bottom: 6px solid #c2b8a4; border-top: 0; }
.down::before { content: ""; border: 3px solid transparent; border-top: 6px solid #55534d; border-bottom: 0; }
.down { margin-top: auto; border-radius: 0 0 6px 6px; }
.thumb { height: 255px; border: 1px solid #b8a98c; border-left: 0; border-radius: 7px; background: repeating-linear-gradient(#c8b99f 0 1px, transparent 1px 3px) center / 6px 7px no-repeat, linear-gradient(90deg, #fff, #f7f3ec 50%, #ded2bf); }

/* dialog floating over the page */
.dialog {
  position: absolute; left: 457px; top: 69px; width: 436px; height: 456px; padding: 11px 13px 0;
  background: #fff; border: 1px solid #aaa; border-radius: 5px; font-size: 11px; color: #222; display: flex; flex-direction: column;
}
.dtop { height: 23px; padding: 0 0 5px 3px; display: flex; align-items: center; }
.focus { margin-left: 6px; width: 18px; height: 18px; padding: 1px; border: 1px solid #f5907c; border-radius: 4px; background: #fbd6ce; margin-top: 2px; }
.dtabs { height: 31px; border: 1px solid #aaa; border-radius: 4px; background: linear-gradient(#e0e0e0, #c8c8c8); display: flex; padding: 3px 2px 0; flex: none; width: 408px; }
.dt { height: 26px; width: 61px; border: 1px solid #d3d3d3; border-bottom: 0; border-radius: 4px 4px 0 0; background: linear-gradient(#eee 50%, #e4e4e4 50%, #eaeaea); color: #555; text-align: center; line-height: 25px; letter-spacing: -.05px; }
.dt.on { margin-left: 3px; width: 87px; height: 27px; background: #fff; border-color: #aaa; color: #222; }
.table { margin-top: 2px; height: 325px; width: 407px; border: 1px solid #aaa; border-radius: 4px; overflow: hidden; flex: none; }
.thead { height: 23px; background: linear-gradient(#eee 50%, #e4e4e4 50%, #ebebeb); border-bottom: 1px solid #d3d3d3; display: flex; color: #555; text-align: center; }
.thead span { width: 387px; line-height: 19px; border-right: 1px solid #d3d3d3; }
.tbody { height: 300px; display: flex; justify-content: space-between; }
.rows { width: 387px; border-right: 1px solid #aaa; }
.rows div { height: 23px; border-bottom: 1px solid #aaa; padding-left: 5px; line-height: 26px; display: flex; letter-spacing: -.12px; }
.rows .hot { background: #fcfaf0; border-bottom-color: #fcefa1; color: #363636; }
.rows svg { width: 14px; height: 14px; margin: 3px 3px 0 0; }
.inner .thumb { height: 127px; }
.inner .down { height: 18px; }
.dfoot { margin: 13px -11px 0; border-top: 1px solid #aaa; padding: 9px 15px 0; display: flex; justify-content: flex-end; gap: 5px; }
.dfoot b { font-weight: normal; height: 26px; width: 48px; border: 1px solid #d3d3d3; border-radius: 4px; background: linear-gradient(#eee 50%, #e4e4e4 50%, #eaeaea); color: #555; text-align: center; line-height: 25px; }
.dfoot b + b { width: 58px; }
.resize { position: absolute; right: 3px; bottom: 3px; }
.cursor { position: absolute; left: 615px; top: 95px; }

/* find bar */
.find { flex: none; height: 35px; display: flex; align-items: center; background: #efebe3; border-top: 1px solid #857a6d; color: #3c3b37; }
.fx { margin-left: 7px; color: #5a5955; }
.fl { margin-left: 13px; width: 41px; }
.finput { width: 189px; height: 26px; border: 1px solid #9d927c; border-radius: 4px; background: #fff; padding: 3px 6px; line-height: 18px; }
.ar { border: 4px solid transparent; }
.ar.l { border-right: 7px solid #66655f; border-left: 0; margin: 0 5px 0 16px; }
.ar.r { border-left: 7px solid #66655f; border-right: 0; margin: 0 6px 0 16px; }
.f2 { width: 43px; }
.f3 { letter-spacing: -.1px; }
.f4 { letter-spacing: -.2px; }
.hl { margin: 0 1px 0 0; }
.fcb { width: 12px; height: 12px; border: 1px solid #c9bda9; border-radius: 2px; background: #fff; margin: 0 5px 0 13px; }

.task { flex: none; height: 24px; display: flex; align-items: center; background: linear-gradient(#5a5953, #3e3d39); color: #dfdbd2; padding-left: 1px; }
.task .grip { margin: 0 4px 0 4px; width: 4px; }
.tk { width: 68.500px; margin-right: 1px; height: 23px; display: flex; align-items: center; background: linear-gradient(#42413d, #353431); border: 1px solid #4a4945; border-radius: 3px; padding-left: 4px; flex: none; }
.tk.on { background: linear-gradient(#7c6d5c, #69594a); border-color: #66584a; }
.tk svg { width: 16px; height: 16px; margin-right: 7px; }
.trash { margin-left: 4px; }
.ws { margin-left: auto; display: flex; height: 24px; }
.ws i { width: 40px; background: #2a2926; border-right: 1px solid #504f4a; border-top: 1px solid #504f4a; }
.ws .on { background: #ded5ca; border: 1px solid #fff; display: flex; align-items: center; justify-content: center; margin: 1px 0; }
```
